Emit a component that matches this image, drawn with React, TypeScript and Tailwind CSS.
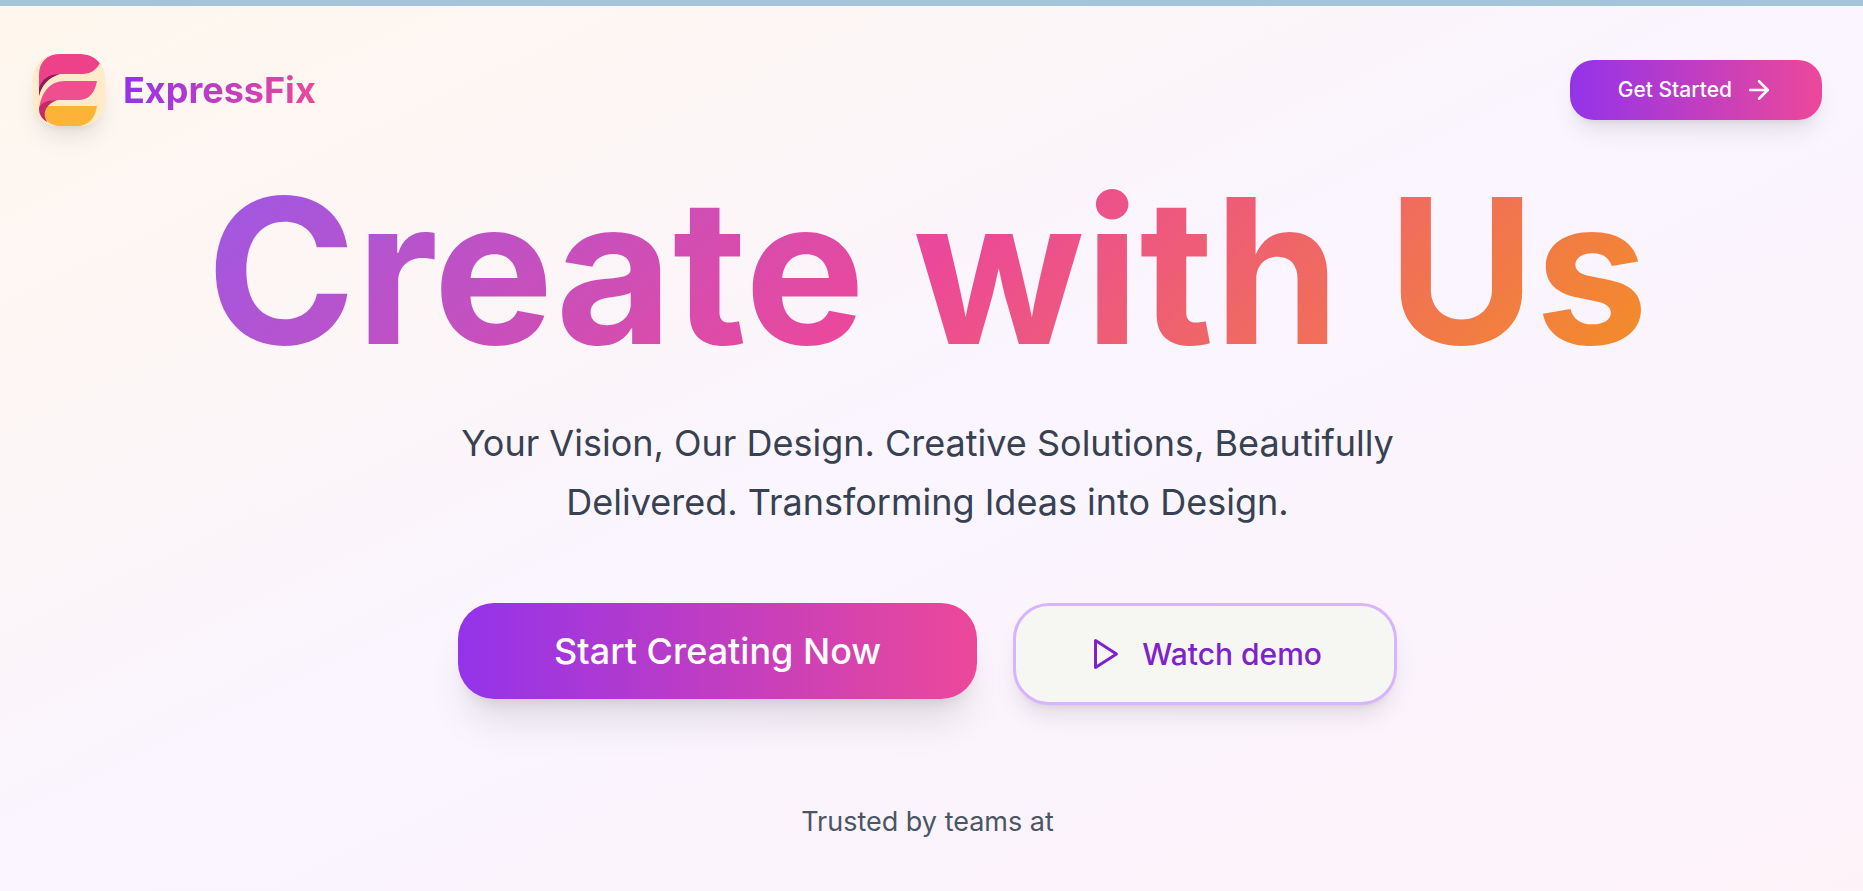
import { ArrowRight } from "lucide-react";

const brandGradient = "bg-linear-to-r/srgb from-[#9333ea] to-[#ec4899]";
const softShadow = "shadow-[0_15px_23px_-5px_rgba(0,0,0,0.1),0_6px_9px_-6px_rgba(0,0,0,0.1)]";

function Logo() {
  return (
    <svg viewBox="0 0 72 72" className={`size-18 rounded-3xl ${softShadow}`} aria-hidden="true">
      <rect width="72" height="72" fill="#ffebc8" />
      <path d="M6 42V21C6 8 14 0 27 0h21c9 0 15 4 19 9-4 7-9 11-18 11H26C14 21 9 30 6 42Z" fill="#ed4189" />
      <path d="M6 42V34C9 25 16 20 27 20C15 24 9 31 6 42Z" fill="#8f1d55" />
      <path d="M6 56C8 38 17 27 32 27h32c-2 12-8 19-19 19H26C15 46 10 49 6 56Z" fill="#ef4f8e" />
      <path d="M14 68C8 64 6 60 6 54c2-5 8-8 18-8C14 50 10 57 14 68Z" fill="#c42a68" />
      <path d="M17 52h47c-2 13-9 20-20 20H25C14 71 9 63 13 55c1-2 2-3 4-3Z" fill="#fdb338" />
    </svg>
  );
}

function PlayIcon() {
  return (
    <svg viewBox="0 0 24 24" className="size-9" fill="none" stroke="currentColor" strokeWidth="2" strokeLinecap="round" strokeLinejoin="round" aria-hidden="true">
      <polygon points="5 3 19 12 5 21 5 3" />
    </svg>
  );
}

export default function App() {
  return (
    <div className="flex min-h-screen flex-col border-t-6 border-[#a3c4d9] bg-linear-to-br/srgb from-[#fff7ed] via-[#faf5ff] to-[#fdf2f8] font-['Inter',sans-serif]">
      <header className="flex items-center justify-between pt-12 pr-[41px] pl-[33px]">
        <div className="flex items-center gap-[18px]">
          <Logo />
          <span className={`${brandGradient} bg-clip-text text-4xl font-bold text-transparent`}>ExpressFix</span>
        </div>
        <button type="button" className={`${brandGradient} ${softShadow} flex h-15 items-center gap-3 rounded-3xl px-12 text-[21px] font-medium text-white`}>
          Get Started
          <ArrowRight className="size-[30px]" />
        </button>
      </header>

      <main className="flex flex-col items-center pr-[41px] pl-[33px] text-center">
        <h1 className="mt-11 w-full bg-[linear-gradient(135deg,#8b5cf6,#ec4899,#f59e0b)] bg-clip-text text-[202px] leading-[202px] font-bold text-transparent">
          Create with Us
        </h1>
        <p className="mt-[42px] max-w-5xl text-4xl leading-[59px] text-[#374151]">
          Your Vision, Our Design. Creative Solutions, Beautifully Delivered. Transforming Ideas into Design.
        </p>
        <div className="mt-[71px] flex items-start gap-9">
          <button type="button" className={`${brandGradient} h-24 rounded-[36px] px-24 text-4xl font-medium text-white shadow-[0_30px_38px_-8px_rgba(0,0,0,0.1),0_12px_15px_-9px_rgba(0,0,0,0.1)]`}>
            Start Creating Now
          </button>
          <button type="button" className={`${softShadow} flex h-[102px] items-center gap-[18px] rounded-[36px] border-3 border-[#d8b4fe] bg-[#f6f7f2] px-18 text-3xl font-medium text-[#7e22ce]`}>
            <PlayIcon />
            Watch demo
          </button>
        </div>
        <p className="mt-24 text-[27px] leading-[42px] text-[#4b5563]">Trusted by teams at</p>
      </main>
    </div>
  );
}
